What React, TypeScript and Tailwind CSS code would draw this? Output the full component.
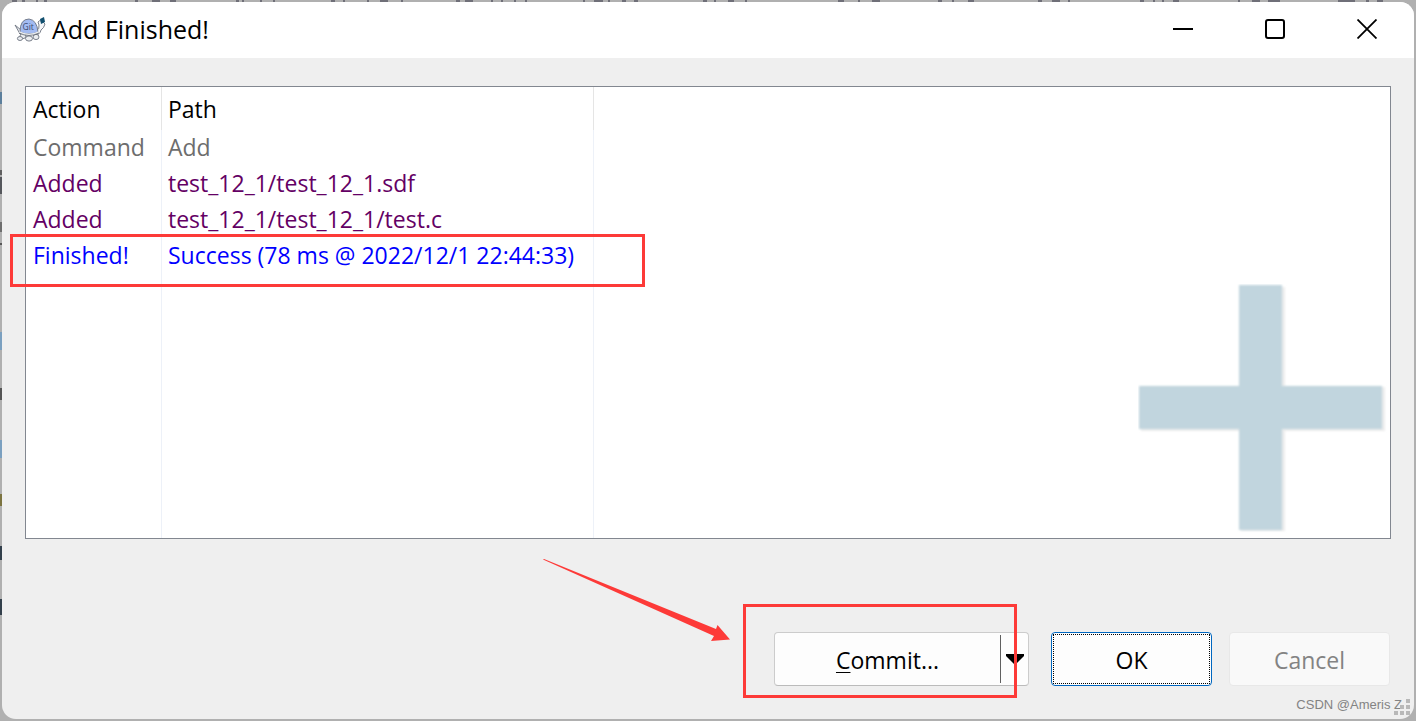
import type { ReactNode } from 'react'

const logRows = [
  { action: 'Command', path: 'Add', color: 'text-[#6d6d6d]' },
  { action: 'Added', path: 'test_12_1/test_12_1.sdf', color: 'text-[#640064]' },
  { action: 'Added', path: 'test_12_1/test_12_1/test.c', color: 'text-[#640064]' },
  { action: 'Finished!', path: 'Success (78 ms @ 2022/12/1 22:44:33)', color: 'text-[#0000ff]' },
]

// pieces of the window behind that stick out above the dialog
const topMarks = [
  [12, 5], [22, 3], [36, 2], [44, 3], [135, 3], [152, 8], [170, 6], [236, 3],
  [242, 2], [260, 2], [273, 2], [331, 4], [343, 2], [367, 2], [380, 8], [401, 2],
  [456, 4], [465, 8], [491, 2], [501, 2], [514, 2], [525, 2], [583, 2], [594, 9],
  [608, 2], [622, 4], [634, 4], [703, 4], [714, 2], [728, 6], [745, 2], [838, 6],
  [858, 2], [872, 8], [938, 4], [952, 2], [968, 6], [1038, 4], [1052, 8], [1068, 2],
  [1140, 4], [1153, 2], [1162, 2], [1173, 6], [1238, 2], [1252, 8], [1268, 6], [1274, 6],
  [1338, 17], [1366, 3], [1377, 6],
]

const leftMarks = [
  [92, 12, '#5c7f9c'], [170, 5, '#606060'], [177, 17, '#55575c'], [222, 10, '#6e6e6e'], [243, 2, '#555555'],
  [332, 18, '#7ba0c0'], [388, 12, '#555555'], [440, 18, '#7ba0c0'], [494, 12, '#7c7440'],
  [546, 14, '#33404c'], [599, 16, '#33404c'],
] as const

function TurtleIcon() {
  return (
    <svg viewBox="0 0 32 28" className="h-7 w-8" aria-hidden="true">
      <g stroke="#6d7480" strokeWidth="0.9" strokeLinejoin="round">
        <path d="M1 9 L7 14 L6 18 Z" fill="#e8eaee" />
        <path d="M22 15 Q26 13 25 9 L24 6 Q25 4 28 5 L31 8 Q30 12 27 14 Q26 19 21 19 Z" fill="#f6f7f9" />
        <ellipse cx="9" cy="20" rx="3" ry="2.600" fill="#eceef1" />
        <ellipse cx="6" cy="22.500" rx="2.600" ry="2" fill="#eceef1" />
        <ellipse cx="15" cy="22.500" rx="3.500" ry="2.600" fill="#eceef1" />
        <ellipse cx="22" cy="21" rx="3" ry="2.600" fill="#eceef1" />
        <path d="M6 16 Q6 3 15 3 Q23 4 24 16 Q15 20 6 16 Z" fill="#a3bbf2" />
      </g>
      <path d="M5 16 Q15 21 25 16" fill="none" stroke="#eceef1" strokeWidth="1.6" />
      <path d="M5 17 Q15 22 25 17" fill="none" stroke="#5d6470" strokeWidth="0.8" />
      <path d="M26 3 L30 1 L31 6 L27 8 Z" fill="#12506f" />
      <text x="8.5" y="14" fontSize="8.5" fontFamily="Open Sans, sans-serif" fill="#3c4a70">Git</text>
    </svg>
  )
}

function CaptionButton({ label, children }: { label: string; children: ReactNode }) {
  return (
    <button type="button" aria-label={label} className="flex h-14 w-[92px] items-center justify-center pb-0.5">
      <svg viewBox="0 0 20 20" className="size-5" fill="none" stroke="#000">
        {children}
      </svg>
    </button>
  )
}

function TitleBar() {
  return (
    <header className="flex h-14 shrink-0 items-center bg-white pr-px pl-3">
      <TurtleIcon />
      <h1 className="ml-1.5 flex-1 pb-0.5 text-[25px] leading-9 text-black">Add Finished!</h1>
      <div className="flex">
        <CaptionButton label="Minimize">
          <path d="M0 10h20" strokeWidth="2" />
        </CaptionButton>
        <CaptionButton label="Maximize">
          <rect x="1" y="1" width="18" height="18" rx="2" strokeWidth="2" />
        </CaptionButton>
        <CaptionButton label="Close">
          <path d="M0.5 0.5l19 19M19.5 0.5l-19 19" strokeWidth="1.8" />
        </CaptionButton>
      </div>
    </header>
  )
}

function PlusWatermark() {
  return (
    <svg viewBox="0 0 250 250" className="pointer-events-none absolute right-0.5 bottom-1 size-[250px]" aria-hidden="true">
      <defs>
        <filter id="soft" x="-5%" y="-5%" width="110%" height="110%">
          <feGaussianBlur stdDeviation="1.3" />
        </filter>
      </defs>
      <path d="M103 3h44v100h100v44h-100v100h-44v-100H3v-44h100z" fill="#ededed" filter="url(#soft)" />
      <path d="M101 1h43v101h100v43h-100v101h-43v-101H1v-43h100z" fill="#c1d5de" filter="url(#soft)" />
    </svg>
  )
}

function LogList() {
  return (
    <div className="relative min-h-60 flex-1 border border-[#828790] bg-white">
      <PlusWatermark />
      <table className="relative h-full w-full table-fixed border-separate border-spacing-0 text-left text-[23px] leading-8">
        <colgroup>
          <col className="w-[136px]" />
          <col className="w-[432px]" />
          <col />
        </colgroup>
        <thead>
          <tr className="h-[43px] text-black">
            <th className="border-r border-[#e5e5e5] pl-[7px] font-normal">Action</th>
            <th className="border-r border-[#e5e5e5] pl-1.5 font-normal">Path</th>
            <td />
          </tr>
        </thead>
        <tbody>
          {logRows.map((row) => (
            <tr key={row.path} className={`h-9 ${row.color}`}>
              <td className="border-r border-[#edf1f8] pb-0.5 pl-[7px]">{row.action}</td>
              <td className="border-r border-[#edf1f8] pb-0.5 pl-1.5 whitespace-nowrap">{row.path}</td>
              <td />
            </tr>
          ))}
          <tr className="h-auto">
            <td className="border-r border-[#edf1f8]" />
            <td className="border-r border-[#edf1f8]" />
            <td />
          </tr>
        </tbody>
      </table>
      <div className="pointer-events-none absolute top-[147px] -left-4 h-[53px] w-[635px] border-3 border-[#fd3a38]" />
    </div>
  )
}

function Footer() {
  return (
    <footer className="flex h-[180px] shrink-0 items-end justify-end pr-px pb-[33px] text-[23px]">
      <div className="relative mr-[22px] flex h-[54px] w-[255px] rounded border border-[#cccccc] border-b-[#bbbbbb] bg-[#fdfdfd] text-black">
        <button type="button" className="flex-1 pt-0.5">
          <span className="underline decoration-1 underline-offset-3">C</span>ommit...
        </button>
        <button type="button" aria-label="More actions" className="my-0.5 flex w-7 items-center justify-center border-l border-[#606060]">
          <svg viewBox="0 0 18 10" className="h-2.5 w-[18px]">
            <path d="M0 0h18v2l-8 8h-2L0 2z" fill="#000" />
          </svg>
        </button>
        <div className="pointer-events-none absolute -top-[29px] -left-8 h-[94px] w-[274px] border-3 border-[#fd3a38]" />
        <svg viewBox="0 0 188 84" className="pointer-events-none absolute -top-[74px] right-[297px] h-[84px] w-[188px]" aria-hidden="true">
          <path d="M0 0.5L1 0L173 70L174.500 66L187 80.500L168 82L171 77Z" fill="#fd3a38" />
        </svg>
      </div>
      <button type="button" className="mr-[17px] h-[54px] w-[161px] rounded border border-[#0067c0] bg-[#fdfdfd] p-px text-black">
        <span className="flex h-full items-center justify-center border border-dotted border-black pt-0.5">OK</span>
      </button>
      <button type="button" disabled className="h-[54px] w-[161px] rounded border border-[#e8e8e8] bg-[#f9f9f9] pt-0.5 text-[#838383]">
        Cancel
      </button>
    </footer>
  )
}

export default function App() {
  return (
    <div className="relative flex h-screen min-h-[500px] flex-col overflow-hidden bg-[#b0b0b0] p-0.5 font-['Open_Sans','Noto_Sans',sans-serif]">
      <svg className="absolute inset-0 size-full" aria-hidden="true">
        {topMarks.map(([x, w]) => (
          <rect key={x} x={x} y="0" width={w} height="2" fill="#6f6f78" />
        ))}
        {leftMarks.map(([y, h, fill]) => (
          <rect key={y} x="0" y={y} width="2" height={h} fill={fill} />
        ))}
      </svg>
      <main className="relative flex flex-1 flex-col overflow-hidden rounded-[14px] bg-[#efefef]">
        <TitleBar />
        <div className="flex flex-1 flex-col px-[23px] pt-7">
          <LogList />
          <Footer />
        </div>
        <div className="absolute right-1 bottom-1 flex items-end">
          <p className="-mr-2 font-['Liberation_Sans',sans-serif] text-[13px] leading-5 text-[#838383]">CSDN @Ameris Z</p>
          <svg viewBox="0 0 16 16" className="size-4" fill="#b8b8b8" aria-hidden="true">
            <path d="M12 0h4v4h-4zM6 6h4v4H6zM12 6h4v4h-4zM0 12h4v4H0zM6 12h4v4H6zM12 12h4v4h-4z" />
          </svg>
        </div>
      </main>
    </div>
  )
}
